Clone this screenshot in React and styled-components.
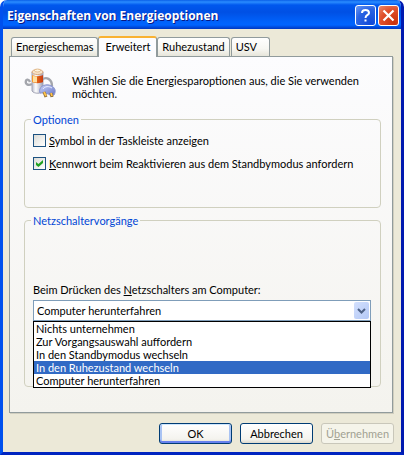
import React, { useState } from "react"
import styled, { createGlobalStyle, css } from "styled-components"

const tabs = ["Energieschemas", "Erweitert", "Ruhezustand", "USV"]

const actions = [
  "Nichts unternehmen",
  "Zur Vorgangsauswahl auffordern",
  "In den Standbymodus wechseln",
  "In den Ruhezustand wechseln",
  "Computer herunterfahren",
]

const BatteryIcon = () => (
  <svg width="34" height="32" viewBox="0 0 34 32" aria-hidden="true">
    <defs>
      <linearGradient id="can">
        <stop offset="0" stopColor="#b9bccb" />
        <stop offset=".35" stopColor="#ffffff" />
        <stop offset="1" stopColor="#9b9eb4" />
      </linearGradient>
      <linearGradient id="band">
        <stop offset="0" stopColor="#f8a030" />
        <stop offset=".5" stopColor="#e06018" />
        <stop offset="1" stopColor="#c83c10" />
      </linearGradient>
      <linearGradient id="plug" x2="1" y2="1">
        <stop offset="0" stopColor="#c9d3fa" />
        <stop offset="1" stopColor="#6674c4" />
      </linearGradient>
    </defs>
    <path d="M8 16C4 18 1 16 2 13C2 11 5 11 6 14" fill="none" stroke="#a4a6ac" strokeWidth="2.4" />
    <path d="M18 12C22 8 28 11 28 18" fill="none" stroke="#a4a6ac" strokeWidth="2.4" />
    <path d="M8 4V23C10 26 18 26 19 23V4Z" fill="url(#can)" stroke="#a5a6b6" />
    <path d="M8 7C10 8.5 17 8.5 19 7V14C17 15.5 10 15.5 8 14Z" fill="url(#band)" />
    <path d="M9 8L13 8.5V14.5L9 14Z" fill="#ffe0a0" />
    <ellipse cx="13.5" cy="4" rx="5.5" ry="2.5" fill="#f6e4cc" stroke="#dba878" />
    <ellipse cx="13.5" cy="2.5" rx="3" ry="1.5" fill="#fff4dd" stroke="#d8a870" strokeWidth=".7" />
    <path d="M16 25C14 19 20 16 25 17C30 18 33 22 30 27L27 28C24 25 20 25 16 25Z" fill="url(#plug)" stroke="#8a94cb" />
    <path d="M19 21C21 18 25 18 28 20" fill="none" stroke="#e9edff" />
    <path d="M20 24L22 29M27 25L28 29" stroke="#8a6a34" strokeWidth="3" />
    <path d="M20 24L22 28M27 25L28 28" stroke="#ffc34c" strokeWidth="1.8" />
  </svg>
)

const App = () => {
  const [tab, setTab] = useState("Erweitert")
  const [open, setOpen] = useState(true)
  const [action, setAction] = useState("Computer herunterfahren")
  const [hovered, setHovered] = useState("In den Ruhezustand wechseln")

  const toggleList = event => {
    event.preventDefault()
    setOpen(!open)
  }

  const choose = item => {
    setAction(item)
    setOpen(false)
  }

  return (
    <>
      <GlobalStyle />
      <Window>
        <TitleBar>
          <Title>Eigenschaften von Energieoptionen</Title>
          <CaptionButton aria-label="Hilfe">
            <svg width="19" height="19" viewBox="0 0 19 19">
              <path d="M6 7C6 3 13 3 13 7C13 9 9.5 9 9.5 12" fill="none" stroke="#fff" strokeWidth="2" />
              <path d="M8.5 13.5H10.5V15.5H8.5Z" fill="#fff" />
            </svg>
          </CaptionButton>
          <CaptionButton $close aria-label="Schließen">
            <svg width="19" height="19" viewBox="0 0 19 19">
              <path d="M4.5 4.5L14.5 14.5M14.5 4.5L4.5 14.5" stroke="#fff" strokeWidth="2.2" />
            </svg>
          </CaptionButton>
        </TitleBar>
        <Body>
          <TabList role="tablist">
            {tabs.map(name => (
              <Tab
                key={name}
                role="tab"
                aria-selected={name === tab}
                $active={name === tab}
                onClick={() => setTab(name)}
              >
                {name}
              </Tab>
            ))}
          </TabList>
          <Panel role="tabpanel">
            <Intro>
              <BatteryIcon />
              <p>Wählen Sie die Energiesparoptionen aus, die Sie verwenden möchten.</p>
            </Intro>
            <Group>
              <Legend>Optionen</Legend>
              <CheckList>
                <CheckLabel>
                  <CheckBox />
                  <span><u>S</u>ymbol in der Taskleiste anzeigen</span>
                </CheckLabel>
                <CheckLabel>
                  <CheckBox defaultChecked />
                  <span><u>K</u>ennwort beim Reaktivieren aus dem Standbymodus anfordern</span>
                </CheckLabel>
              </CheckList>
            </Group>
            <Group>
              <Legend>Netzschaltervorgänge</Legend>
              <Field>
                <label htmlFor="power-button">
                  Beim Drücken des <u>N</u>etzschalters am Computer:
                </label>
                <Combo>
                  <Select
                    id="power-button"
                    value={action}
                    onMouseDown={toggleList}
                    onChange={event => setAction(event.target.value)}
                  >
                    {actions.map(item => <option key={item}>{item}</option>)}
                  </Select>
                  <Arrow>
                    <svg width="9" height="6" viewBox="0 0 9 6">
                      <path d="M1 1L4.5 4.5L8 1" fill="none" stroke="#4d6185" strokeWidth="2" />
                    </svg>
                  </Arrow>
                  {open && (
                    <Options role="listbox" aria-label="Netzschaltervorgänge">
                      {actions.map(item => (
                        <Option
                          key={item}
                          role="option"
                          aria-selected={item === hovered}
                          $active={item === hovered}
                          onMouseEnter={() => setHovered(item)}
                          onClick={() => choose(item)}
                        >
                          {item}
                        </Option>
                      ))}
                    </Options>
                  )}
                </Combo>
              </Field>
            </Group>
          </Panel>
          <Buttons>
            <Button $primary>OK</Button>
            <Button>Abbrechen</Button>
            <Button disabled>Ü<u>b</u>ernehmen</Button>
          </Buttons>
        </Body>
      </Window>
    </>
  )
}

export default App

const GlobalStyle = createGlobalStyle`
  * {
    box-sizing: border-box;
  }

  body {
    margin: 0;
    background: #fff;
    color: #000;
    font: 11px/13px Lato, "Liberation Sans", sans-serif;
  }

  button,
  select {
    font: inherit;
    color: inherit;
  }
`

const Window = styled.main`
  display: flex;
  flex-direction: column;
  min-height: 100vh;
  border: solid;
  border-width: 0 3px 3px;
  border-color: #0054f0 #0019b0 #0024c0 #0050ee;
  border-radius: 7px 7px 0 0;
  overflow: hidden;
`

const TitleBar = styled.header`
  display: flex;
  align-items: center;
  gap: 2px;
  height: 29px;
  margin: 0 -3px;
  padding: 2px 5px 0 7px;
  background: linear-gradient(#0a5fe8, #2a8cff 2px, #0058ee 5px, #0050e4 12px, #0062fb 22px, #0064ff 25px, #0041cf 28px, #0038c0);
`

const Title = styled.h1`
  flex: 1;
  margin: 0;
  color: #fff;
  font: bold 12px/16px "Open Sans", "Trebuchet MS", sans-serif;
  text-shadow: 1px 1px #0a1883;
  white-space: nowrap;
`

const CaptionButton = styled.button`
  display: grid;
  place-items: center;
  width: 21px;
  height: 21px;
  padding: 0;
  border: 1px solid #fff;
  border-radius: 3px;
  background: ${props => props.$close
    ? "radial-gradient(circle at 80% 90%, #c8310a, #e0502c 60%, #eb8a6c)"
    : "radial-gradient(circle at 80% 90%, #1149d8, #2a63e2 60%, #6d9bf5)"};
`

const Body = styled.div`
  flex: 1;
  padding: 7px 7px 8px 6px;
  background: #ece9d8;
`

const TabList = styled.div`
  display: flex;
  align-items: flex-end;
  height: 21px;
  margin-bottom: -1px;
  padding-left: 2px;
`

const Tab = styled.button`
  height: 19px;
  margin-bottom: 1px;
  padding: 0 4px 1px;
  border: 1px solid #919b9c;
  border-bottom: 0;
  border-radius: 3px 3px 0 0;
  background: linear-gradient(#fff, #f7f7f2 60%, #e6e5da);
  white-space: nowrap;

  &:last-child {
    padding-right: 12px;
    margin-left: 1px;
  }

  ${props => props.$active && css`
    position: relative;
    height: 21px;
    margin-bottom: 0;
    padding: 0 6px 3px;
    border-top: 2px solid #f9b233;
    background: #fcfcfe;
  `}
`

const Panel = styled.section`
  display: flex;
  flex-direction: column;
  gap: 6px;
  margin-right: 1px;
  padding: 11px 11px 25px 14px;
  border: 1px solid #919b9c;
  background: linear-gradient(#fcfcfe, #f4f3ee);
  box-shadow: 1px 1px #d0cebf;
`

const Intro = styled.div`
  display: flex;
  gap: 14px;
  min-height: 39px;

  svg {
    flex: none;
  }

  p {
    margin: 6px 0 0;
  }
`

const Group = styled.fieldset`
  min-width: 0;
  margin: 0;
  padding: 0 9px 0 8px;
  border: 1px solid #d0d0bf;
  border-radius: 4px;
`

const Legend = styled.legend`
  margin-left: -2px;
  padding: 0 2px;
  color: #0046d5;
`

const CheckList = styled.div`
  display: grid;
  gap: 10px;
  padding: 8px 0 37px;
`

const CheckLabel = styled.label`
  display: flex;
  gap: 3px;
`

const CheckBox = styled.input.attrs({ type: "checkbox" })`
  appearance: none;
  display: grid;
  place-items: center;
  flex: none;
  width: 13px;
  height: 13px;
  margin: 0;
  border: 1px solid #1d5281;
  background: linear-gradient(135deg, #dcdcd7, #fff);

  &:checked::after {
    content: "";
    width: 7px;
    height: 7px;
    background: #21a121;
    clip-path: polygon(0 29%, 35% 57%, 100% 0, 100% 43%, 35% 100%, 0 71%);
  }
`

const Field = styled.div`
  display: grid;
  gap: 4px;
  padding: 56px 0 65px;
`

const Combo = styled.div`
  position: relative;
`

const Select = styled.select`
  appearance: none;
  display: block;
  width: 100%;
  height: 21px;
  padding: 0 20px 0 3px;
  border: 1px solid #7f9db9;
  border-radius: 0;
  background: #fff;
  outline: 0;
`

const Arrow = styled.span`
  position: absolute;
  top: 2px;
  right: 2px;
  display: grid;
  place-items: center;
  width: 15px;
  height: 17px;
  border-radius: 2px;
  background: linear-gradient(135deg, #d3e0fd, #b3c8f6);
  pointer-events: none;
`

const Options = styled.ul`
  position: absolute;
  top: 100%;
  left: 0;
  right: 0;
  z-index: 1;
  margin: 0;
  padding: 0;
  border: 1px solid #000;
  background: #fff;
  list-style: none;
`

const Option = styled.li`
  padding: 0 2px;

  ${props => props.$active && css`
    background: #316ac5;
    color: #fff;
  `}
`

const Buttons = styled.footer`
  display: flex;
  justify-content: flex-end;
  gap: 8px;
  padding-top: 10px;
`

const Button = styled.button`
  width: 73px;
  height: 21px;
  padding: 0;
  border: 1px solid #003c74;
  border-radius: 3px;
  background: linear-gradient(#fff, #f4f3ee 80%, #dcd8cc);

  ${props => props.$primary && css`
    box-shadow: inset 0 1px #cee7ff, inset 0 -2px #6982ee, inset 2px 0 #a9c3f3, inset -2px 0 #a9c3f3;
  `}

  &:disabled {
    border-color: #c9c7ba;
    background: #f5f4ea;
    color: #a1a192;
  }
`
